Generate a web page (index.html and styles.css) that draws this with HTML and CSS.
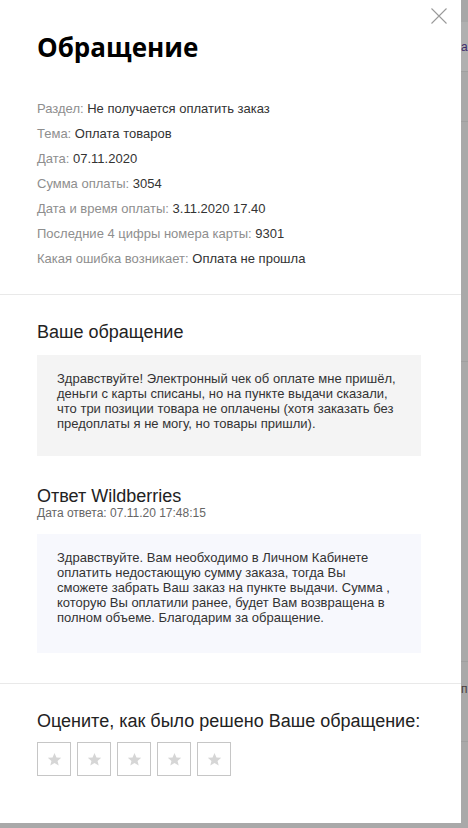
FILE: index.html
```html
<!DOCTYPE html>
<html lang="ru">
<head>
<meta charset="utf-8">
<title>Обращение</title>
<link rel="stylesheet" href="styles.css">
</head>
<body>
<div class="screen">
  <aside class="drawer">
    <button class="close" aria-label="Закрыть">
      <svg width="16" height="16" viewBox="0 0 16 16"><path d="M0.5 0.5L15.5 15.5M15.5 0.5L0.5 15.5" stroke="#9a9a9a" stroke-width="1.1" fill="none"/></svg>
    </button>
    <section class="section info">
      <h1 class="title">Обращение</h1>
      <ul class="facts">
        <li><span class="label">Раздел:</span> Не получается оплатить заказ</li>
        <li><span class="label">Тема:</span> Оплата товаров</li>
        <li><span class="label">Дата:</span> 07.11.2020</li>
        <li><span class="label">Сумма оплаты:</span> 3054</li>
        <li><span class="label">Дата и время оплаты:</span> 3.11.2020 17.40</li>
        <li><span class="label">Последние 4 цифры номера карты:</span> 9301</li>
        <li><span class="label">Какая ошибка возникает:</span> Оплата не прошла</li>
      </ul>
    </section>
    <section class="section thread">
      <h2 class="heading">Ваше обращение</h2>
      <div class="message message-user">Здравствуйте! Электронный чек об оплате мне пришёл, деньги с карты списаны, но на пункте выдачи сказали, что три позиции товара не оплачены (хотя заказать без предоплаты я не могу, но товары пришли).</div>
      <h2 class="heading heading-reply">Ответ Wildberries</h2>
      <div class="reply-date">Дата ответа: 07.11.20 17:48:15</div>
      <div class="message message-reply">Здравствуйте. Вам необходимо в Личном Кабинете оплатить недостающую сумму заказа, тогда Вы сможете забрать Ваш заказ на пункте выдачи. Сумма , которую Вы оплатили ранее, будет Вам возвращена в полном объеме. Благодарим за обращение.</div>
    </section>
    <section class="section rate">
      <h2 class="heading">Оцените, как было решено Ваше обращение:</h2>
      <div class="stars">
        <button class="star" aria-label="1"><svg width="15" height="15" viewBox="0 0 24 24"><path d="M12 1.5l3.1 7.1 7.6.6-5.8 5 1.8 7.5L12 17.7l-6.7 4 1.8-7.5-5.8-5 7.6-.6z" fill="#d6d6d6"/></svg></button>
        <button class="star" aria-label="2"><svg width="15" height="15" viewBox="0 0 24 24"><path d="M12 1.5l3.1 7.1 7.6.6-5.8 5 1.8 7.5L12 17.7l-6.7 4 1.8-7.5-5.8-5 7.6-.6z" fill="#d6d6d6"/></svg></button>
        <button class="star" aria-label="3"><svg width="15" height="15" viewBox="0 0 24 24"><path d="M12 1.5l3.1 7.1 7.6.6-5.8 5 1.8 7.5L12 17.7l-6.7 4 1.8-7.5-5.8-5 7.6-.6z" fill="#d6d6d6"/></svg></button>
        <button class="star" aria-label="4"><svg width="15" height="15" viewBox="0 0 24 24"><path d="M12 1.5l3.1 7.1 7.6.6-5.8 5 1.8 7.5L12 17.7l-6.7 4 1.8-7.5-5.8-5 7.6-.6z" fill="#d6d6d6"/></svg></button>
        <button class="star" aria-label="5"><svg width="15" height="15" viewBox="0 0 24 24"><path d="M12 1.5l3.1 7.1 7.6.6-5.8 5 1.8 7.5L12 17.7l-6.7 4 1.8-7.5-5.8-5 7.6-.6z" fill="#d6d6d6"/></svg></button>
      </div>
    </section>
  </aside>
  <div class="backdrop">
    <div class="bg-row bg-row-a"><span class="bg-text">а</span></div>
    <div class="bg-row bg-row-b"></div>
    <div class="bg-row bg-row-c"></div>
    <div class="bg-row bg-row-d"></div>
    <div class="bg-row bg-row-e"><span class="bg-text bg-text-p">п</span></div>
    <div class="bg-row bg-row-f"></div>
  </div>
</div>
</body>
</html>
```
FILE: styles.css
```css
* { box-sizing: border-box; }
html, body { margin: 0; padding: 0; }
body {
  width: 468px;
  height: 828px;
  overflow: hidden;
  background: #a9a9a9;
  font-family: "Liberation Sans", Arial, sans-serif;
  color: #333;
}
.screen {
  display: flex;
  height: 828px;
}
.drawer {
  position: relative;
  width: 461px;
  height: 823px;
  flex: none;
  background: #fff;
}
.close {
  position: absolute;
  top: 7px;
  left: 431px;
  width: 17px;
  height: 17px;
  padding: 0;
  border: 0;
  background: none;
}
.close svg { display: block; }
.section {
  padding: 0 40px 0 37px;
  border-bottom: 1px solid #e9e9e9;
}
.section.rate { border-bottom: 0; padding-top: 27px; }
.info { padding-top: 31px; padding-bottom: 23px; }
.title {
  margin: 0 0 33px;
  font-family: "Open Sans", "Liberation Sans", sans-serif;
  font-weight: 700;
  font-size: 26px;
  line-height: 32px;
  color: #000;
}
.facts {
  list-style: none;
  margin: 0;
  padding: 0;
  font-size: 13px;
  line-height: 25px;
  color: #333;
}
.label { color: #8e8e8e; }
.thread { padding-top: 27px; padding-bottom: 30px; }
.heading {
  margin: 0;
  font-weight: 400;
  font-size: 18px;
  line-height: 20px;
  color: #222;
  white-space: nowrap;
}
.message {
  margin-top: 13px;
  padding: 16px 24px 25px 20px;
  font-size: 13px;
  line-height: 15px;
  color: #333;
}
.message-user { background: #f4f4f4; }
.heading-reply { margin-top: 30px; }
.reply-date {
  font-size: 12px;
  line-height: 14px;
  color: #666;
}
.message-reply {
  margin-top: 14px;
  padding-bottom: 28px;
  background: #f7f8fd;
}
.stars {
  display: flex;
  gap: 6px;
  margin-top: 11px;
}
.star {
  width: 34px;
  height: 34px;
  padding: 0;
  border: 1px solid #c6c6c6;
  background: #fff;
  display: flex;
  align-items: center;
  justify-content: center;
}
.star svg { display: block; }
.backdrop {
  flex: 1;
  display: flex;
  flex-direction: column;
  overflow: hidden;
}
.bg-row {
  border-bottom: 1px solid #9f9f9f;
}
.bg-row-a { height: 72px; background: #b0b0b0; border-top: 22px solid #a7a7a7; }
.bg-row-b { height: 50px; }
.bg-row-c { height: 240px; }
.bg-row-d { height: 300px; }
.bg-row-e { height: 80px; }
.bg-row-f { flex: 1; border-bottom: 0; }
.bg-text {
  display: block;
  font-size: 12px;
  line-height: 14px;
  color: #3c2a6a;
  margin-top: 18px;
}
.bg-text-p { margin-top: 20px; color: #4a3a3a; }
```
